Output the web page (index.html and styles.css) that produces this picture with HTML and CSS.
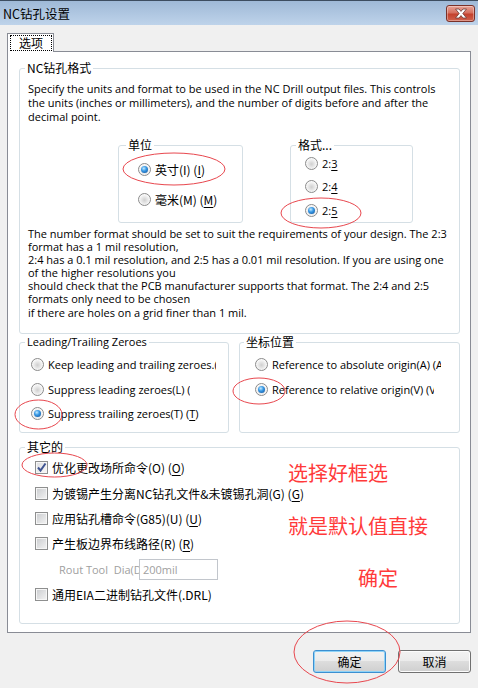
FILE: index.html
```html
<!DOCTYPE html>
<html lang="zh">
<head>
  <meta charset="UTF-8" />
  <title>NC钻孔设置</title>
  <link rel="stylesheet" href="styles.css">
</head>
<body>
  <div class="titlebar">
    <span class="title">NC钻孔设置</span>
    <div class="close">
      <svg width="14" height="11" viewBox="0 0 14 11">
        <path d="M1.5 1 H5 L7 3.4 L9 1 H12.5 L8.8 5.5 L12.5 10 H9 L7 7.6 L5 10 H1.5 L5.2 5.5 Z" fill="#fff" stroke="#6b3a35" stroke-width="0.8" stroke-linejoin="round"/>
      </svg>
    </div>
  </div>

  <div class="dialog">
    <div class="tabs">
      <div class="tab"><span class="focus">选项</span></div>
    </div>

    <div class="page">
      <div class="group g-format">
        <div class="legend zh">NC钻孔格式</div>
        <p class="note note1">Specify the units and format to be used in the NC Drill output files. This controls<br>the units (inches or millimeters), and the number of digits before and after the<br>decimal point.</p>

        <div class="subrow">
          <div class="group sub sub-unit">
            <div class="legend zh">单位</div>
            <div class="opt zh"><span class="radio on"></span>英寸(I) (<u>I</u>)</div>
            <div class="opt zh"><span class="radio"></span>毫米(M) (<u>M</u>)</div>
          </div>
          <div class="group sub sub-fmt">
            <div class="legend zh">格式...</div>
            <div class="opt"><span class="radio"></span>2:<u>3</u></div>
            <div class="opt"><span class="radio"></span>2:<u>4</u></div>
            <div class="opt"><span class="radio on"></span>2:<u>5</u></div>
          </div>
        </div>

        <p class="note note2">The number format should be set to suit the requirements of your design. The 2:3<br>format has a 1 mil resolution,<br>2:4 has a 0.1 mil resolution, and 2:5 has a 0.01 mil resolution. If you are using one<br>of the higher resolutions you<br>should check that the PCB manufacturer supports that format. The 2:4 and 2:5<br>formats only need to be chosen<br>if there are holes on a grid finer than 1 mil.</p>
      </div>

      <div class="row2">
        <div class="group g-zeroes">
          <div class="legend">Leading/Trailing Zeroes</div>
          <div class="opt"><span class="radio"></span><span class="clip w-keep">Keep leading and trailing zeroes.(K) (K)</span></div>
          <div class="opt"><span class="radio"></span><span class="clip w-lead">Suppress leading zeroes(L) (L)</span></div>
          <div class="opt"><span class="radio on"></span>Suppress trailing zeroes(T) (<u>T</u>)</div>
        </div>
        <div class="group g-origin">
          <div class="legend zh">坐标位置</div>
          <div class="opt"><span class="radio"></span><span class="clip w-abs">Reference to absolute origin(A) (A)</span></div>
          <div class="opt"><span class="radio on"></span><span class="clip w-rel">Reference to relative origin(V) (V)</span></div>
        </div>
      </div>

      <div class="group g-misc">
        <div class="legend zh">其它的</div>
        <div class="opt zh"><span class="check on"><svg width="11" height="11" viewBox="0 0 11 11"><path d="M2 5.5 L4.5 8.5 L9.5 1.5" fill="none" stroke="#3f5491" stroke-width="2"/></svg></span>优化更改场所命令(O) (<u>O</u>)</div>
        <div class="opt zh"><span class="check"></span>为镀锡产生分离NC钻孔文件&amp;未镀锡孔洞(G) (<u>G</u>)</div>
        <div class="opt zh"><span class="check"></span>应用钻孔槽命令(G85)(U) (<u>U</u>)</div>
        <div class="opt zh"><span class="check"></span>产生板边界布线路径(R) (<u>R</u>)</div>
        <div class="opt rout"><span class="clip w-rout">Rout Tool&nbsp;&nbsp;Dia(D) (D)</span><span class="field">200mil</span></div>
        <div class="opt zh"><span class="check"></span>通用EIA二进制钻孔文件(.DRL)</div>
      </div>
    </div>

    <div class="footer">
      <div class="btn primary zh">确定</div>
      <div class="btn zh">取消</div>
    </div>
  </div>

  <!-- hand-drawn red marks over the screenshot -->
  <svg class="marks" width="478" height="688" viewBox="0 0 478 688">
    <g fill="none" stroke="#e8474e" stroke-width="1">
      <ellipse cx="174" cy="169" rx="51" ry="16"/>
      <ellipse cx="321" cy="213" rx="40" ry="15"/>
      <ellipse cx="38.5" cy="414.5" rx="23.5" ry="14.5"/>
      <ellipse cx="259" cy="391" rx="26" ry="13"/>
      <ellipse cx="54.5" cy="465" rx="32.5" ry="12"/>
      <ellipse cx="347" cy="652" rx="53" ry="31"/>
    </g>
  </svg>
  <div class="hint h1">选择好框选</div>
  <div class="hint h2">就是默认值直接</div>
  <div class="hint h3">确定</div>
</body>
</html>
```

FILE: styles.css
```css
* {
  box-sizing: border-box;
}

body {
  margin: 0;
  width: 478px;
  height: 688px;
  overflow: hidden;
  position: relative;
  background: #f0f0f0;
  font-family: "Open Sans", "Noto Sans CJK SC", sans-serif;
  font-size: 11px;
  color: #000;
}

.zh {
  font-family: "Noto Sans CJK SC", sans-serif;
  font-size: 12px;
}

u {
  text-decoration-thickness: 1px;
  text-underline-offset: 2px;
}

/* title bar */
.titlebar {
  height: 25px;
  border-top: 1px solid #3d4d60;
  background: linear-gradient(#9fb9d7, #bed3ea);
  display: flex;
  justify-content: space-between;
  padding: 0 3px 0 3px;
}

.title {
  font-family: "Noto Sans CJK SC", sans-serif;
  font-size: 12.5px;
  line-height: 25px;
}

.close {
  width: 29px;
  height: 17px;
  margin-top: 4px;
  border: 1px solid #7a3129;
  border-radius: 3px;
  background: linear-gradient(#e7a397 0%, #d6705f 45%, #c4412d 55%, #d0624d 100%);
  box-shadow: inset 0 0 0 1px rgba(255, 255, 255, 0.35);
  display: flex;
  align-items: center;
  justify-content: center;
}

/* tab + page */
.dialog {
  padding: 8px 7px 0;
}

.tabs {
  display: flex;
}

.tab {
  width: 47px;
  height: 19px;
  margin-bottom: -1px;
  position: relative;
  z-index: 1;
  background: #fff;
  border: 1px solid #898c95;
  border-bottom: none;
}

.focus {
  display: block;
  margin: 1px 1px 0 2px;
  height: 16px;
  border: 1px dotted #000;
  text-align: center;
  font-family: "Noto Sans CJK SC", sans-serif;
  font-size: 12px;
  line-height: 14px;
}

.page {
  height: 582px;
  background: #fff;
  border: 1px solid #898c95;
  padding: 16px 10px 0 11px;
}

/* group boxes */
.group {
  border: 1px solid #d5dfe5;
  border-radius: 3px;
  background: #fff;
}

.legend {
  display: table;
  height: 14px;
  line-height: 14px;
  margin: -8px 0 0 -3px;
  padding: 0 2px;
  background: #fff;
  white-space: nowrap;
}

.note {
  margin: 0;
  white-space: nowrap;
}

.g-format {
  padding: 0 8px 14px;
}

.note1 {
  margin-top: 7px;
  line-height: 14px;
}

.note2 {
  margin-top: 4px;
  line-height: 13.1px;
}

.subrow {
  display: flex;
  gap: 47px;
  margin: 21px 0 0 90px;
}

.sub {
  height: 78px;
}

.sub-unit {
  width: 125px;
  padding-left: 19px;
}

.sub-unit .legend {
  margin-left: -12px;
}

.sub-fmt {
  width: 123px;
  padding-left: 14px;
}

.sub-fmt .legend {
  margin-left: -9px;
}

.opt {
  height: 20px;
  display: flex;
  align-items: center;
  white-space: nowrap;
}

.sub-unit .legend + .opt {
  margin-top: 7px;
}

.sub-unit .opt + .opt {
  margin-top: 10px;
}

.sub-fmt .legend + .opt {
  margin-top: 1px;
}

.sub-fmt .opt + .opt {
  margin-top: 3.5px;
}

.row2 {
  display: flex;
  gap: 10px;
  margin-top: 8px;
}

.row2 .group {
  height: 91px;
}

.g-zeroes {
  width: 210px;
  padding-left: 11px;
}

.g-zeroes .legend {
  margin-left: -6px;
}

.g-zeroes .legend + .opt {
  margin-top: 6px;
}

.g-zeroes .opt + .opt {
  margin-top: 4.5px;
}

.g-origin {
  width: 221px;
  padding-left: 15px;
}

.g-origin .legend {
  margin-left: -11px;
}

.g-origin .legend + .opt {
  margin-top: 6px;
}

.g-origin .opt + .opt {
  margin-top: 5px;
}

.g-misc {
  margin-top: 14px;
  height: 177px;
  padding-left: 15px;
}

.g-misc .legend {
  margin-left: -10px;
}

.g-misc .legend + .opt {
  margin-top: 4px;
}

.g-misc .opt + .opt {
  margin-top: 5.4px;
}

.clip {
  overflow: hidden;
  display: block;
}

.w-keep { width: 168px; }
.w-lead { width: 142px; }
.w-abs { width: 169px; }
.w-rel { width: 162px; }
.w-rout { width: 80px; color: #a0a0a0; }

.rout {
  padding-left: 24px;
}

.field {
  width: 79px;
  height: 21px;
  border: 1px solid #c2c6cc;
  color: #a0a0a0;
  padding-left: 3px;
  line-height: 19px;
}

/* radio + checkbox */
.radio {
  flex: none;
  width: 13px;
  height: 13px;
  margin-right: 4px;
  border-radius: 50%;
  border: 1px solid #8b8b8b;
  background: radial-gradient(circle at 50% 55%, #cfcfcf 0, #e9e9e9 40%, #fbfbfb 70%, #d8d8d8 100%);
  display: flex;
  align-items: center;
  justify-content: center;
}

.radio.on::after {
  content: "";
  width: 7px;
  height: 7px;
  border-radius: 50%;
  background: radial-gradient(circle at 40% 35%, #c4ebff 0, #3a9ae6 40%, #0b4c95 100%);
}

.check {
  flex: none;
  width: 13px;
  height: 13px;
  margin-right: 4px;
  border: 1px solid #8e8f8f;
  background: linear-gradient(135deg, #c9cbce, #f4f4f4);
  box-shadow: inset 0 0 0 1px #f6f6f6;
  display: flex;
  align-items: center;
  justify-content: center;
}

.check.on {
  background: linear-gradient(135deg, #dcdde0, #f8f8f8);
}

/* buttons */
.footer {
  display: flex;
  justify-content: flex-end;
  gap: 12px;
  margin-top: 17px;
}

.btn {
  width: 73px;
  height: 23px;
  border: 1px solid #707070;
  border-radius: 3px;
  background: linear-gradient(#f2f2f2 0%, #ebebeb 49%, #dddddd 50%, #cfcfcf 100%);
  box-shadow: inset 0 0 0 1px #fcfcfc;
  text-align: center;
  line-height: 21px;
}

.primary {
  border-color: #3c8fd0;
  box-shadow: inset 0 0 0 1px #8fd3f7;
}

/* red annotations */
.marks {
  position: absolute;
  top: 0;
  left: 0;
  pointer-events: none;
}

.hint {
  position: absolute;
  font-family: "Noto Sans CJK SC", sans-serif;
  font-size: 20px;
  line-height: 20px;
  color: #ff3a3a;
}

.h1 { left: 288px; top: 463px; }
.h2 { left: 288px; top: 516px; }
.h3 { left: 358px; top: 568px; }
```
